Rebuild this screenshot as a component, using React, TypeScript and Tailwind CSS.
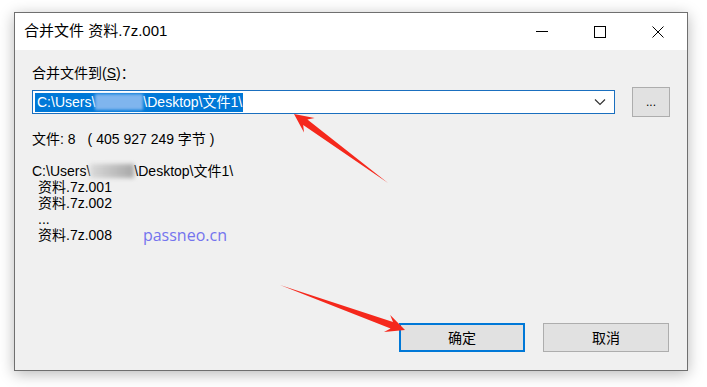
import type { FC } from 'react'

const font = { fontFamily: '"Liberation Sans", "Noto Sans CJK SC", sans-serif' }

const Arrows: FC = () => (
  <svg
    className="pointer-events-none absolute left-0 top-0"
    width={707}
    height={387}
    viewBox="0 0 707 387"
  >
    <polygon
      points="388,183 307.4,119.5 314.6,117.9 294,114 304,132.5 303.2,125.1"
      fill="#f5281c"
    />
    <polygon
      points="280,285 390.6,328.6 384,332.1 405,330 390.2,315.1 393,322"
      fill="#f5281c"
    />
  </svg>
)

const TitleBar: FC = () => (
  <div className="flex h-[37px] items-center bg-white">
    <span className="pl-[9px] text-[15px] text-black">合并文件 资料.7z.001</span>
    <div className="ml-auto flex h-full">
      <div className="flex w-[58px] items-center justify-center">
        <div className="h-px w-[12px] bg-black" />
      </div>
      <div className="flex w-[58px] items-center justify-center">
        <div className="h-[12px] w-[12px] border border-black" />
      </div>
      <div className="flex w-[58px] items-center justify-center">
        <svg width="12" height="12" viewBox="0 0 12 12">
          <path d="M0.5 0.5 L11.5 11.5 M11.5 0.5 L0.5 11.5" stroke="#000" strokeWidth="1" />
        </svg>
      </div>
    </div>
  </div>
)

export default function App() {
  return (
    <div className="relative h-[387px] w-[707px] overflow-hidden bg-white" style={font}>
      <div className="pl-[14px] pt-[12px]">
        <div className="flex h-[359px] w-[674px] flex-col border border-[#6f6f6f] shadow-[0_3px_14px_rgba(0,0,0,0.28)]">
          <TitleBar />

          {/* Body */}
          <div className="flex flex-1 flex-col bg-[#f0f0f0] pl-[17px] pr-[17px] text-[14px] leading-[16px] text-black">
            <div className="mt-[15px]">
              合并文件到(<span className="underline">S</span>)：
            </div>

            <div className="mt-[6px] flex items-center">
              <div className="flex h-[24px] w-[583px] items-center border border-[#1a6fbf] bg-white pl-[2px] pr-[8px]">
                <div className="flex h-[19px] items-center bg-[#0078d7] pl-[2px] pr-[1px] text-white">
                  <span>C:\Users\</span>
                  <span className="h-[16px] w-[48px] bg-[#7fb5ee] blur-[1.5px]" />
                  <span>\Desktop\文件1\</span>
                </div>
                <svg className="ml-auto" width="12" height="8" viewBox="0 0 12 8">
                  <path d="M1 1.5 L6 6.5 L11 1.5" fill="none" stroke="#333" strokeWidth="1.2" />
                </svg>
              </div>
              <div className="ml-[17px] flex h-[30px] w-[38px] items-center justify-center border border-[#adadad] bg-[#e1e1e1] text-[12px] leading-none">
                ...
              </div>
            </div>

            <div className="mt-[14px] flex">
              <span>文件: 8</span>
              <span className="ml-[12px]">( 405 927 249 字节 )</span>
            </div>

            <div className="mt-[16px] flex flex-col">
              <div className="flex items-center">
                <span>C:\Users\</span>
                <span className="h-[14px] w-[44px] bg-gradient-to-r from-[#dadada] to-[#a8a8a8] blur-[2px]" />
                <span>\Desktop\文件1\</span>
              </div>
              <div className="pl-[6px]">资料.7z.001</div>
              <div className="pl-[6px]">资料.7z.002</div>
              <div className="pl-[6px]">...</div>
              <div className="flex items-center pl-[6px]">
                <span>资料.7z.008</span>
                <span
                  className="ml-[31px] text-[16px] leading-[16px] text-[#7474ee]"
                  style={{ fontFamily: '"Open Sans", sans-serif' }}
                >
                  passneo.cn
                </span>
              </div>
            </div>

            <div className="mt-auto mb-[18px] flex justify-end gap-[18px] pr-px">
              <div className="flex h-[29px] w-[126px] items-center justify-center border-2 border-[#0078d7] bg-[#e1e1e1]">
                确定
              </div>
              <div className="flex h-[29px] w-[126px] items-center justify-center border border-[#adadad] bg-[#e1e1e1]">
                取消
              </div>
            </div>
          </div>
        </div>
      </div>
      <Arrows />
    </div>
  )
}
